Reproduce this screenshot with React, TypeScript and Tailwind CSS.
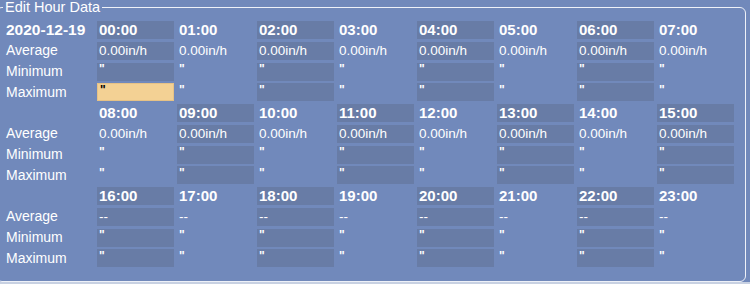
const hours = Array.from({ length: 24 }, (_, i) => `${String(i).padStart(2, '0')}:00`);

const rowLabels = ['Average', 'Minimum', 'Maximum'];

const Cell = ({
    shaded,
    active,
    bold,
    children,
}: {
    shaded: boolean;
    active?: boolean;
    bold?: boolean;
    children: React.ReactNode;
}) => {
    let cls = 'h-[18px] pl-[2px] flex items-center overflow-hidden whitespace-nowrap';
    if (active) cls += ' bg-[#f3d194] border border-[#e6c286] pl-[1px] text-black';
    else if (shaded) cls += ' bg-[#687ca6]';
    if (bold) cls += ' text-[15px] font-bold';
    else cls += ' text-[13.5px]';
    return <div className={cls}>{children}</div>;
};

const Quote = () => <span className="-mt-[5px] text-[12px] font-bold leading-none">"</span>;

export default function App() {
    const blocks = [0, 1, 2];

    return (
        <div
            className="h-[284px] w-[750px] overflow-hidden bg-[#c8d1e2] text-white"
            style={{ fontFamily: '"Liberation Sans", Arial, sans-serif' }}
        >
            <div className="h-[282px] bg-[#7189bb]">
                <fieldset className="-ml-[4px] h-[282px] w-[750px] rounded-[6px] border border-[#eef1f8] pl-[6px] pr-0 pt-[7px] pb-0">
                    <legend className="px-[2px] text-[14.5px] leading-[14px]">Edit Hour Data</legend>
                    <div className="grid grid-cols-[88px_repeat(8,77px)] gap-x-[3px] gap-y-[2.75px] pl-[3px]">
                        {blocks.map((b) => {
                            const slice = hours.slice(b * 8, b * 8 + 8);
                            return [
                                <div key={`h${b}`} className="flex h-[18px] items-center text-[15.5px] font-bold">
                                    {b === 0 ? '2020-12-19' : ''}
                                </div>,
                                ...slice.map((h, i) => (
                                    <Cell key={h} shaded={(i + b) % 2 === 0} bold>
                                        {h}
                                    </Cell>
                                )),
                                ...rowLabels.flatMap((label, r) => [
                                    <div key={`${b}${label}`} className="flex h-[18px] items-center text-[14px]">
                                        {label}
                                    </div>,
                                    ...slice.map((h, i) => (
                                        <Cell
                                            key={`${h}${label}`}
                                            shaded={(i + b) % 2 === 0}
                                            active={b === 0 && i === 0 && r === 2}
                                        >
                                            {r === 0 ? (b === 2 ? '--' : '0.00in/h') : <Quote />}
                                        </Cell>
                                    )),
                                ]),
                            ];
                        })}
                    </div>
                </fieldset>
            </div>
        </div>
    );
}
